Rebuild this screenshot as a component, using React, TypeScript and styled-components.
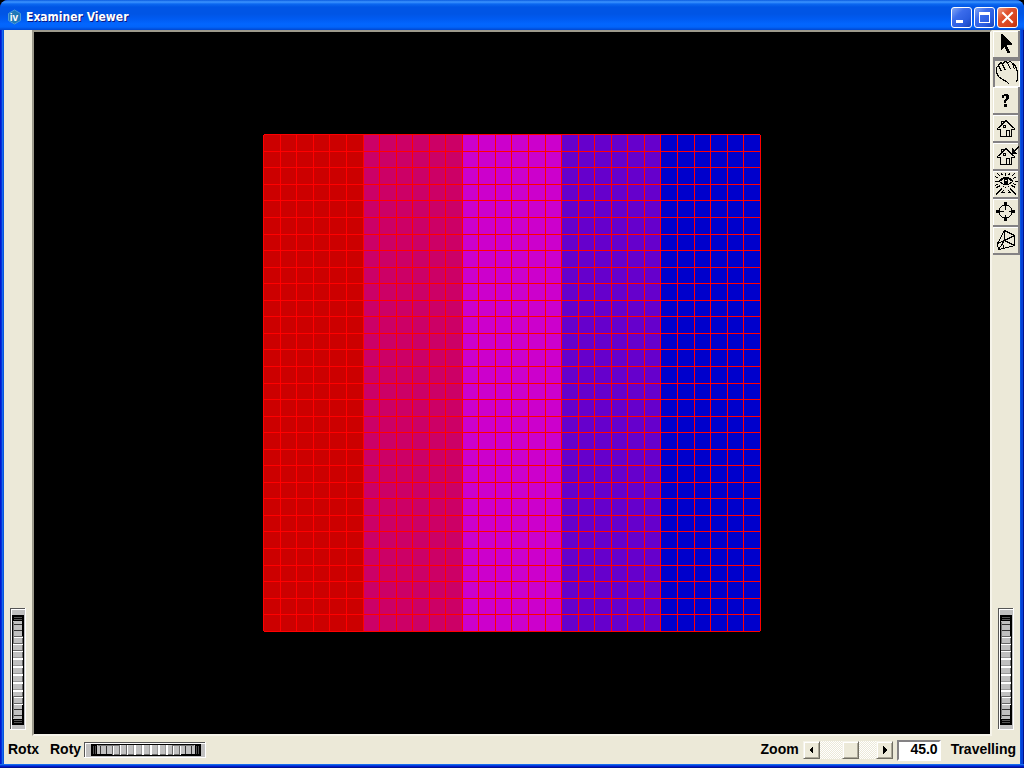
import React from "react";
import styled, { createGlobalStyle, css } from "styled-components";

const face = "#ece9d8";

const GlobalStyle = createGlobalStyle`
  * { box-sizing: border-box; }
  body { margin: 0; background: #000; overflow: hidden; }
  button, input { font: inherit; margin: 0; padding: 0; }
`;

const Window = styled.main`
  display: flex;
  flex-direction: column;
  height: 100vh;
  font: bold 14px/16px "Liberation Sans", Arial, sans-serif;
  color: #000;
  background: #0831d9;
  border-radius: 8px 8px 0 0;
  overflow: hidden;
`;

const TitleBar = styled.header`
  display: flex;
  flex: none;
  align-items: center;
  gap: 4px;
  height: 30px;
  padding: 4px 6px 1px 7px;
  background: linear-gradient(
    #0a5be0 0, #3d95ff 2px, #0b68f0 4px, #0055e5 7px, #0055e5 14px,
    #005bf2 19px, #0266fe 24px, #0264fa 27px, #0047d0 30px
  );
`;

const Title = styled.h1`
  flex: 1;
  margin: 0;
  font: bold 12px/16px "DejaVu Sans Condensed", "DejaVu Sans", sans-serif;
  color: #fff;
  text-shadow: 1px 1px 0 #0a1883;
`;

const CaptionButtons = styled.div`
  display: flex;
  gap: 2px;
  padding-top: 1px;
`;

const CaptionButton = styled.button<{ $close?: boolean }>`
  width: 21px;
  height: 21px;
  border: 1px solid #fff;
  border-radius: 3px;
  background: ${(p) =>
    p.$close
      ? "linear-gradient(135deg, #f0a088 0, #e0532f 35%, #d8421c 75%, #b8300c)"
      : "linear-gradient(135deg, #85a8f4 0, #3b6ceb 35%, #2a5de0 70%, #1743b8)"};
  svg { display: block; }
`;

const Frame = styled.div`
  display: flex;
  flex: 1;
  flex-direction: column;
  min-height: 0;
  padding: 0 4px 4px;
  background:
    linear-gradient(to top, #00138c 0 1px, #0019cf 1px 2px, #0441d8 2px 3px, #166aee 3px 4px) bottom / 100% 4px no-repeat,
    linear-gradient(to right, #0019cf 0 1px, #0831d9 1px 2px, #166aee 2px 3px, #0855dd 3px calc(100% - 3px), #0441d8 calc(100% - 3px) calc(100% - 1px), #00138c calc(100% - 1px));
`;

const Workspace = styled.div`
  display: grid;
  flex: 1;
  grid-template-columns: 28px 1fr 28px;
  min-height: 0;
  background: ${face};
`;

const SideStrip = styled.aside`
  display: flex;
  flex-direction: column;
  align-items: center;
  justify-content: space-between;
  padding: 1px 0 6px;
`;

const WheelStrip = styled(SideStrip)`
  justify-content: flex-end;
`;

const Viewport = styled.section`
  display: flex;
  align-items: center;
  justify-content: center;
  min-width: 0;
  min-height: 0;
  overflow: hidden;
  background: #000;
  border: 2px solid;
  border-color: #9d9a8c #f6f4ea #f6f4ea #9d9a8c;
`;

const Tools = styled.nav`
  display: flex;
  flex-direction: column;
  align-self: flex-end;
`;

const ToolButton = styled.button<{ $pressed?: boolean }>`
  width: 27px;
  height: 28px;
  border: 0;
  background: ${face};
  box-shadow: inset -2px -2px #848284, inset 1px 1px #fff;
  ${(p) => p.$pressed && css`
    box-shadow: inset 2px 2px #848284, inset -1px -1px #fff;
  `}
  svg { display: block; }
`;

const StatusBar = styled.footer`
  display: flex;
  flex: none;
  align-items: center;
  justify-content: space-between;
  height: 28px;
  padding: 0 4px;
  background: ${face};
`;

const StatusGroup = styled.div`
  display: flex;
  align-items: center;
  gap: 4px;
`;

const Label = styled.label`
  padding-bottom: 2px;
`;

const RotLabel = styled(Label)`
  width: 30px;
  margin-right: 8px;
  &:last-of-type { margin-right: 0; }
`;

const WheelBox = styled.div<{ $vertical?: boolean }>`
  position: relative;
  flex: none;
  width: ${(p) => (p.$vertical ? 16 : 122)}px;
  height: ${(p) => (p.$vertical ? 122 : 16)}px;
  svg { display: block; }
`;

const WheelInput = styled.input<{ $vertical?: boolean }>`
  position: absolute;
  inset: 0;
  width: 100%;
  height: 100%;
  opacity: 0;
  ${(p) => p.$vertical && css`writing-mode: vertical-lr;`}
`;

const raised = css`
  border: 1px solid;
  border-color: #f6f4ea #716f64 #716f64 #f6f4ea;
  background: ${face};
  box-shadow: inset 1px 1px #fff, inset -1px -1px #aca899;
`;

const ScrollBar = styled.div`
  display: flex;
  height: 18px;
`;

const ArrowButton = styled.button`
  width: 17px;
  height: 18px;
  ${raised}
  svg { display: block; }
`;

const ZoomSlider = styled.input`
  appearance: none;
  width: 56px;
  height: 18px;
  background: repeating-conic-gradient(#fff 0 25%, ${face} 0 50%) 0 0 / 2px 2px;
  &::-webkit-slider-thumb {
    appearance: none;
    width: 17px;
    height: 18px;
    ${raised}
  }
`;

const ZoomField = styled.input`
  width: 44px;
  height: 21px;
  padding: 0 1px 2px;
  border: 2px solid;
  border-color: #848284 #fff #fff #848284;
  background: #fff;
  text-align: right;
`;

const Travelling = styled(Label)`
  padding-left: 6px;
`;

const bands = ["#cc0000", "#cc0066", "#cc00cc", "#6600cc", "#0000cc"];
const bandEdges = [0, 100, 199, 298, 397, 498];
const cell = 16.55;
const meshLines = (origin: number) => Array.from({ length: 31 }, (_, k) => Math.floor(origin + k * cell));
const columns = meshLines(0.71);
const rows = meshLines(0.77);

function Surface() {
  return (
    <svg width="498" height="498" viewBox="0 0 498 498" shapeRendering="crispEdges" role="img" aria-label="Coloured surface mesh">
      {bands.map((fill, i) => (
        <rect key={fill} x={bandEdges[i]} y="1" width={bandEdges[i + 1] - bandEdges[i]} height="496" fill={fill} />
      ))}
      {rows.map((y) => <path key={y} d={`M1 ${y}h496v1H1z`} fill="#f00" />)}
      {columns.map((x) => <path key={x} d={`M${x} 1h1v496h-1z`} fill="#f00" />)}
    </svg>
  );
}

const ribs = [16, 22, 28, 35, 42, 49, 57, 65, 73, 81, 88, 95, 101, 107];

function Wheel({ id, vertical }: { id: string; vertical?: boolean }) {
  return (
    <WheelBox $vertical={vertical}>
      <svg width={vertical ? 16 : 122} height={vertical ? 122 : 16} shapeRendering="crispEdges" aria-hidden="true">
        <g transform={vertical ? undefined : "matrix(0 1 1 0 0 0)"}>
          <rect width="16" height="122" fill="#fff" />
          <rect width="15" height="121" fill="#555" />
          <rect x="1" y="1" width="14" height="120" fill="#fff" />
          <rect x="2" y="2" width="13" height="119" fill="#c0c0c0" />
          <rect x="2" y="7" width="12" height="110" fill="#000" />
          <rect x="3" y="28" width="10" height="68" fill="#666" />
          <rect x="3" y="13" width="9" height="98" fill="#c0c0c0" />
          <path d="M4 9.500h8M4 11.500h8M4 112.500h8M4 114.500h8" stroke="#555" />
          {ribs.map((y) => {
            const central = y > 45 && y < 85;
            const edge = y < 26 || y > 96;
            return (
              <g key={y}>
                <rect x="3" y={y} width="9" height="1" fill={edge ? "#333" : central ? "#999" : "#666"} />
                {!edge && <rect x="3" y={y + 1} width="10" height={central ? 2 : 1} fill="#fff" />}
              </g>
            );
          })}
          <path d="M3.500 14v22M3.500 88v22" stroke="#777" />
        </g>
      </svg>
      <WheelInput id={id} type="range" $vertical={vertical} />
    </WheelBox>
  );
}

const Lines = ({ d }: { d: string }) => <path d={d} transform="translate(.5 .5)" />;
const Solid = ({ d }: { d: string }) => <path d={d} fill="#000" stroke="none" />;

const House = () => (
  <>
    <Lines d="M12 5L4 13v1h3v7h11v-7h3v-1l-8-8M12 6l-7 7M13 6l7 7M13 21v-6h3v6M8 9V6h2v2" />
    <Lines d="M10 10h2v2h-2z" />
  </>
);

const tools: { name: string; pressed?: boolean; art: React.ReactNode }[] = [
  { name: "Pick", art: <Solid d="M8 3h1l10 10v1h-5v2h1v2h1v2h1v2h-3v-2h-1v-2h-1v-2h-1v1h-1v1h-1v1H8z" /> },
  {
    name: "View",
    pressed: true,
    art: <Lines d="M16 25l-3-3-4-2-4-3-2-4V8l2-2 3 6M5 6l1-2 2-1 1 2 3 6M9 5l1-2 2-1 2 1 3 7M14 3l3-1 2 2 2 6M19 4l2 1 2 4 1 4v6l-1 4" />,
  },
  {
    name: "Help",
    art: <Solid d="M9 8h2V7h4v1h1v4h-1v1h-1v1h-1v2h-2v-3h1v-1h1V9h-2v2H9zM11 17h3v3h-3z" />,
  },
  { name: "Home", art: <House /> },
  {
    name: "Set home",
    art: (
      <>
        <House />
        <Solid d="M19 5h1v1h1v1h1V6h1V5h1V4h1V3h1v2h-1v1h-1v1h-1v1h-1v1h1v1h1v1h-5z" />
      </>
    ),
  },
  {
    name: "View all",
    art: (
      <>
        <Lines d="M6 10l4-3h5l4 3-4 3h-5zM5 10l5-4h5l5 4M11 8h3v4h-3zM12 9v2M13 9v2" />
        <Lines d="M12 4V1M9 4L8 2M15 4l1-2M7 5L4 2M18 5l3-3M5 7L2 5M20 7l3-2M4 10H1M21 10h3M5 12l-3 2M20 12l3 2M7 14l-4 2M18 14l4 2M10 15l-1 1M12 15v1M15 15l1 1" />
        <Lines d="M8 17l-6 6M8 18l-6 6M17 17l6 6M17 18l6 6M10 19l-2 2h3M15 19l2 2h-3" />
      </>
    ),
  },
  {
    name: "Seek",
    art: (
      <>
        <circle cx="12.500" cy="12.500" r="6.500" />
        <Lines d="M12 6v4M12 15v4M6 12h4M15 12h4" />
        <Solid d="M11 3h3v4h-3zM11 18h3v4h-3zM3 11h4v3H3zM18 11h4v3h-4z" />
      </>
    ),
  },
  {
    name: "Projection",
    art: <Lines d="M11 3l10 5v10l-11 3-5 1-1-6 5-2 1 7M4 16l7-13v10l10 5M9 14l12-6M5 22l6-9" />,
  },
];

function ToolIcon({ children }: { children: React.ReactNode }) {
  return (
    <svg width="27" height="28" viewBox="0 0 27 28" shapeRendering="crispEdges" fill="none" stroke="#000" aria-hidden="true">
      {children}
    </svg>
  );
}

export default function App() {
  return (
    <>
      <GlobalStyle />
      <Window>
        <TitleBar>
          <svg width="15" height="16" viewBox="0 0 15 16" aria-hidden="true">
            <path d="M7.500 1l6 3.500v7l-6 3.500-6-3.500v-7z" fill="#1f78b8" stroke="#4a9ad8" />
            <text x="7" y="12" textAnchor="middle" fill="#fff" fontSize="10" fontWeight="bold" fontFamily="Liberation Sans">iv</text>
          </svg>
          <Title>Examiner Viewer</Title>
          <CaptionButtons>
            <CaptionButton aria-label="Minimize">
              <svg width="19" height="19"><path d="M4 12h7v3H4z" fill="#fff" /></svg>
            </CaptionButton>
            <CaptionButton aria-label="Maximize">
              <svg width="19" height="19"><path d="M4 4h11v11H4zM5 7v7h9V7z" fill="#fff" fillRule="evenodd" /></svg>
            </CaptionButton>
            <CaptionButton $close aria-label="Close">
              <svg width="19" height="19"><path d="M5 5l9 9M14 5l-9 9" stroke="#fff" strokeWidth="2" strokeLinecap="square" /></svg>
            </CaptionButton>
          </CaptionButtons>
        </TitleBar>
        <Frame>
          <Workspace>
            <WheelStrip>
              <Wheel id="rotx" vertical />
            </WheelStrip>
            <Viewport>
              <Surface />
            </Viewport>
            <SideStrip>
              <Tools aria-label="Viewer tools">
                {tools.map((t) => (
                  <ToolButton key={t.name} $pressed={t.pressed} aria-label={t.name}>
                    <ToolIcon>{t.art}</ToolIcon>
                  </ToolButton>
                ))}
              </Tools>
              <Wheel id="travelling" vertical />
            </SideStrip>
          </Workspace>
          <StatusBar>
            <StatusGroup>
              <RotLabel htmlFor="rotx">Rotx</RotLabel>
              <RotLabel htmlFor="roty">Roty</RotLabel>
              <Wheel id="roty" />
            </StatusGroup>
            <StatusGroup>
              <Label htmlFor="zoom">Zoom</Label>
              <ScrollBar>
                <ArrowButton aria-label="Zoom out">
                  <svg width="15" height="16" shapeRendering="crispEdges"><path d="M9 4v8L5 8z" /></svg>
                </ArrowButton>
                <ZoomSlider id="zoom" type="range" min="0" max="39" defaultValue="22" />
                <ArrowButton aria-label="Zoom in">
                  <svg width="15" height="16" shapeRendering="crispEdges"><path d="M6 4v8l4-4z" /></svg>
                </ArrowButton>
              </ScrollBar>
              <ZoomField type="text" aria-label="Zoom angle" defaultValue="45.0" />
              <Travelling htmlFor="travelling">Travelling</Travelling>
            </StatusGroup>
          </StatusBar>
        </Frame>
      </Window>
    </>
  );
}
